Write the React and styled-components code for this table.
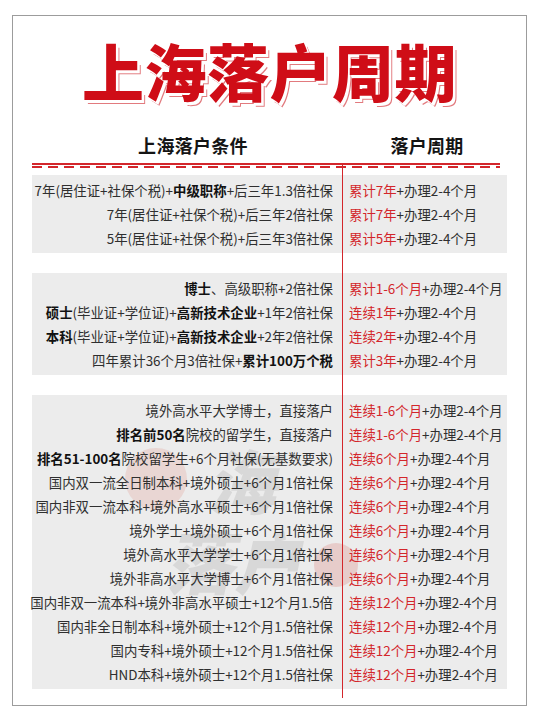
import React from 'react';
import styled, { createGlobalStyle } from 'styled-components';

const GlobalStyle = createGlobalStyle`
  html, body {
    margin: 0;
    padding: 0;
    background: #ffffff;
  }
  body {
    font-family: "Noto Sans CJK SC", "Noto Sans", sans-serif;
    color: #2f2f2f;
  }
`;

const RED = '#d3262b';

const groups = [
  [
    ['7年(居住证+社保个税)+**中级职称**+后三年1.3倍社保', '累计7年'],
    ['7年(居住证+社保个税)+后三年2倍社保', '累计7年'],
    ['5年(居住证+社保个税)+后三年3倍社保', '累计5年'],
  ],
  [
    ['**博士**、高级职称+2倍社保', '累计1-6个月'],
    ['**硕士**(毕业证+学位证)+**高新技术企业**+1年2倍社保', '连续1年'],
    ['**本科**(毕业证+学位证)+**高新技术企业**+2年2倍社保', '连续2年'],
    ['四年累计36个月3倍社保+**累计100万个税**', '累计3年'],
  ],
  [
    ['境外高水平大学博士，直接落户', '连续1-6个月'],
    ['**排名前50名**院校的留学生，直接落户', '连续1-6个月'],
    ['**排名51-100名**院校留学生+6个月社保(无基数要求)', '连续6个月'],
    ['国内双一流全日制本科+境外硕士+6个月1倍社保', '连续6个月'],
    ['国内非双一流本科+境外高水平硕士+6个月1倍社保', '连续6个月'],
    ['境外学士+境外硕士+6个月1倍社保', '连续6个月'],
    ['境外高水平大学学士+6个月1倍社保', '连续6个月'],
    ['境外非高水平大学博士+6个月1倍社保', '连续6个月'],
    ['国内非双一流本科+境外非高水平硕士+12个月1.5倍', '连续12个月'],
    ['国内非全日制本科+境外硕士+12个月1.5倍社保', '连续12个月'],
    ['国内专科+境外硕士+12个月1.5倍社保', '连续12个月'],
    ['HND本科+境外硕士+12个月1.5倍社保', '连续12个月'],
  ],
];

// "**xx**" marks the bold parts of a condition
function renderCondition(text) {
  return text.split('**').map((part, i) =>
    i % 2 === 1 ? <Strong key={i}>{part}</Strong> : <span key={i}>{part}</span>
  );
}

// faint agency stamp behind the third group
function Watermark() {
  return (
    <WatermarkSvg width="250" height="190" viewBox="0 0 250 190">
      <circle cx="32" cy="50" r="31" fill="rgba(226,150,140,0.26)" />
      <circle cx="212" cy="136" r="22" fill="rgba(214,80,70,0.2)" />
      <g fill="rgba(110,110,110,0.15)" fontFamily="Noto Sans CJK SC, sans-serif" fontWeight="900">
        <text x="100" y="80" fontSize="70" transform="skewX(-12)">海</text>
        <text x="76" y="160" fontSize="68" transform="skewX(-12)">落户</text>
      </g>
    </WatermarkSvg>
  );
}

function App() {
  return (
    <>
      <GlobalStyle />
      <Page>
        <Frame>
          <Title>上海落户周期</Title>

          <HeaderRow>
            <HeaderCell>上海落户条件</HeaderCell>
            <HeaderCell>落户周期</HeaderCell>
          </HeaderRow>
          <SolidRule />
          <DashedRule />

          <Body>
            {groups.map((rows, gi) => (
              <Group key={gi}>
                {gi === 2 && <Watermark />}
                {rows.map(([cond, period], ri) => (
                  <Row key={ri}>
                    <Condition>
                      <span>{renderCondition(cond)}</span>
                    </Condition>
                    <Period>
                      <RedText>{period}</RedText>+办理2-4个月
                    </Period>
                  </Row>
                ))}
              </Group>
            ))}
          </Body>
        </Frame>
      </Page>
    </>
  );
}

const Page = styled.div`
  width: 540px;
  padding: 15px 13px 14px 12px;
  box-sizing: border-box;
`;

const Frame = styled.div`
  border: 1px solid #9c9c9c;
  padding: 0 19px 16px 19px;
  box-sizing: border-box;
`;

const Title = styled.h1`
  margin: 23px 0 0;
  text-align: center;
  font-family: "Noto Sans CJK SC", sans-serif;
  font-weight: 900;
  font-size: 62px;
  line-height: 62px;
  letter-spacing: 0.5px;
  color: #cf0d17;
  text-shadow:
    1.5px 1.5px 0 #ffffff,
    2.5px 2.5px 0 #ffffff,
    3.5px 3.5px 0 #e27a7e;
`;

const HeaderRow = styled.div`
  display: grid;
  grid-template-columns: 310px 158px;
  margin-top: 32px;
  width: 468px;
`;

const HeaderCell = styled.div`
  text-align: center;
  padding-left: 12px;
  font-size: 18px;
  font-weight: 700;
  line-height: 24px;
  color: #141414;
  letter-spacing: 0.3px;
`;

const SolidRule = styled.div`
  width: 468px;
  height: 1.5px;
  margin-top: 6px;
  background: ${RED};
`;

const DashedRule = styled.div`
  width: 468px;
  height: 1.5px;
  margin-top: 1.5px;
  background: repeating-linear-gradient(90deg, ${RED} 0 10px, transparent 10px 16px);
`;

const Body = styled.div`
  position: relative;
  margin-top: 7px;
  display: flex;
  flex-direction: column;
  gap: 20px;

  &::before {
    content: '';
    position: absolute;
    left: 310px;
    top: -11px;
    bottom: -9px;
    width: 1px;
    background: ${RED};
    z-index: 2;
  }
`;

const Group = styled.div`
  position: relative;
  background: #ececec;
  padding: 3px 0;
`;

const WatermarkSvg = styled.svg`
  position: absolute;
  left: 92px;
  top: 34px;
  overflow: visible;
  pointer-events: none;
`;

const Row = styled.div`
  position: relative;
  display: grid;
  grid-template-columns: 310px 1fr;
  height: 24px;
  align-items: center;
  font-size: 13.4px;
  white-space: nowrap;
`;

const Condition = styled.div`
  display: flex;
  justify-content: flex-end;
  min-width: 0;
  padding-right: 9px;
`;

const Strong = styled.b`
  font-weight: 700;
  color: #111111;
`;

const Period = styled.div`
  padding-left: 7px;
  color: #2f2f2f;
`;

const RedText = styled.span`
  color: ${RED};
`;

export default App;
